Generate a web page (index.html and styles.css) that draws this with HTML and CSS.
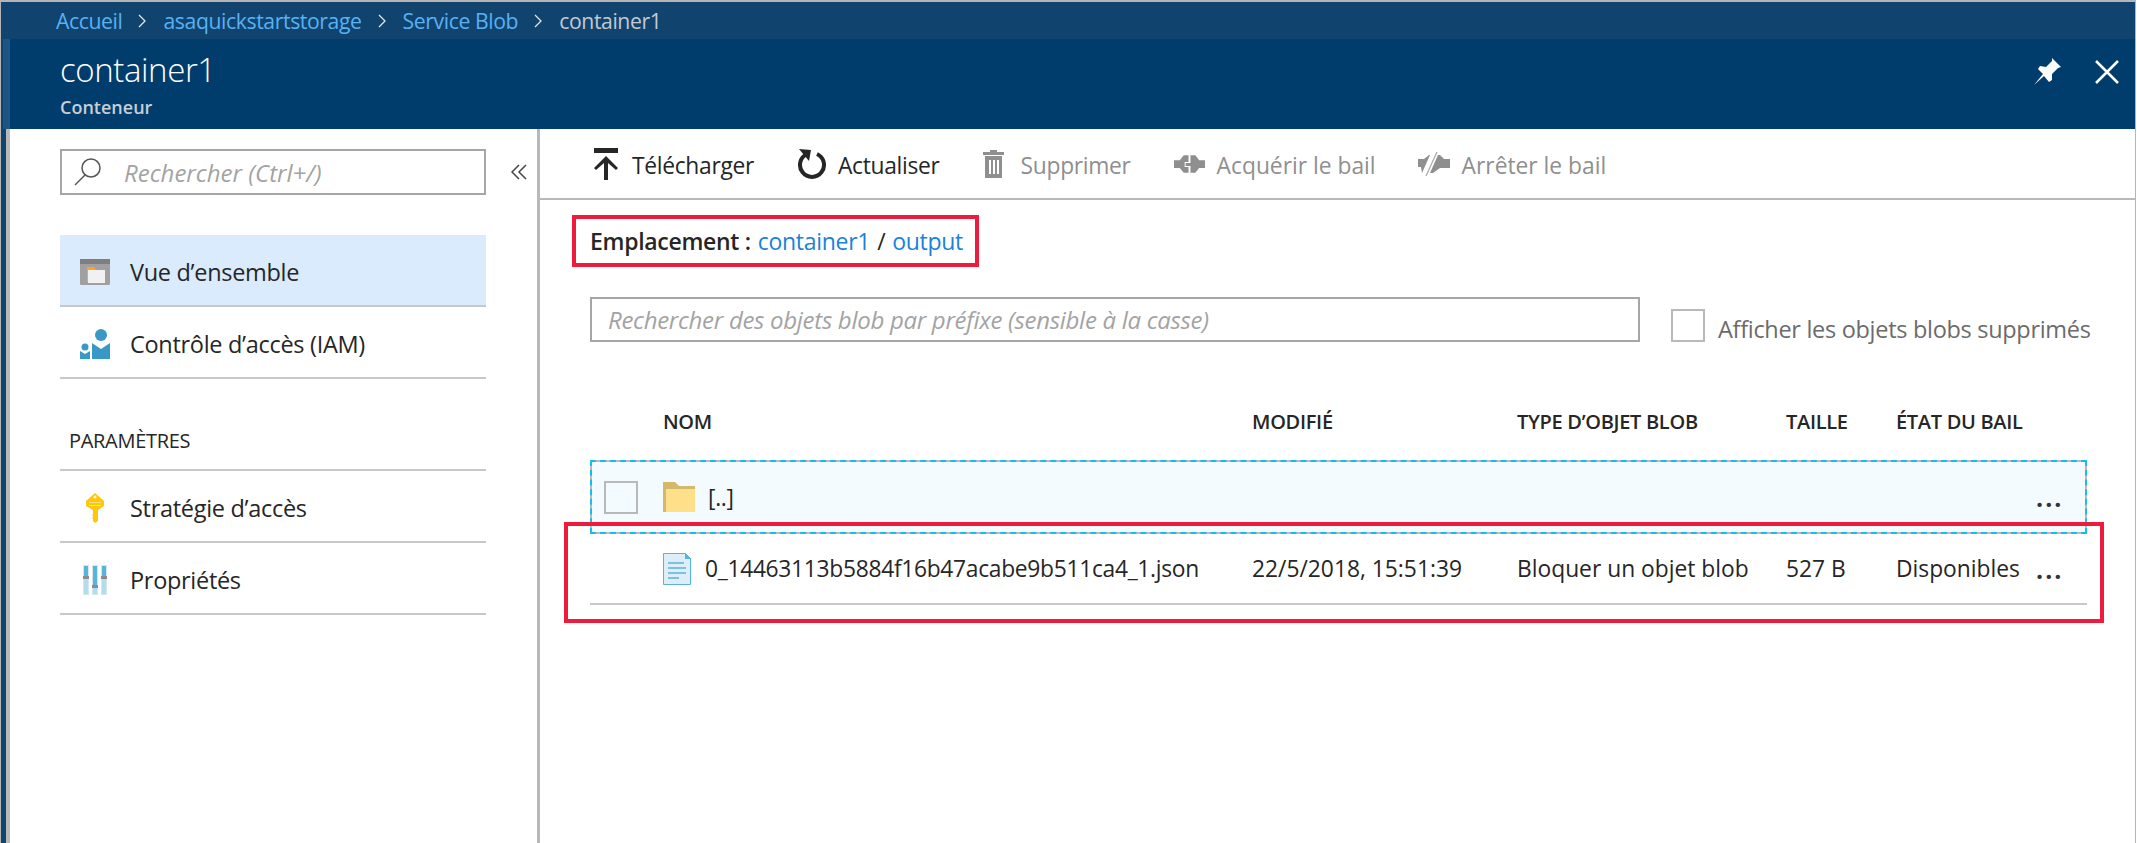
FILE: index.html
```html
<!DOCTYPE html>
<html lang="fr">
<head>
    <meta charset="UTF-8">
    <title>container1</title>
    <link rel="stylesheet" href="styles.css">
</head>
<body>
    <div class="frame">
        <nav class="crumbs">
            <a>Accueil</a>
            <svg class="chev" viewBox="0 0 8 14"><path d="M1 1l6 6-6 6" /></svg>
            <a>asaquickstartstorage</a>
            <svg class="chev" viewBox="0 0 8 14"><path d="M1 1l6 6-6 6" /></svg>
            <a>Service Blob</a>
            <svg class="chev" viewBox="0 0 8 14"><path d="M1 1l6 6-6 6" /></svg>
            <span>container1</span>
        </nav>

        <header class="blade-head">
            <div class="titles">
                <h1>container1</h1>
                <p>Conteneur</p>
            </div>
            <div class="head-icons">
                <svg class="pin" viewBox="0 0 28 28"><path d="M19 1l9 9-3 1-6 6 0 6-3 2-5-6-10 9 9-11-5-5 2-3 6 1 6-6z" /></svg>
                <svg class="close" viewBox="0 0 24 24"><path d="M1 1l22 22M23 1L1 23" /></svg>
            </div>
        </header>

        <div class="blade-body">
            <aside class="side">
                <div class="side-search">
                    <div class="search-box">
                        <svg class="loupe" viewBox="0 0 28 28"><circle cx="17" cy="10" r="9" /><path d="M11 17L1 27" /></svg>
                        <span>Rechercher (Ctrl+/)</span>
                    </div>
                    <svg class="collapse" viewBox="0 0 16 16"><path d="M8 1L1 8l7 7M15 1L8 8l7 7" /></svg>
                </div>

                <ul class="menu">
                    <li class="active">
                        <svg viewBox="0 0 30 26"><rect width="30" height="26" rx="1" fill="#a0a0a0" /><rect width="30" height="5" fill="#7f7f7f" /><path d="M7 8h7l2 3h7v12H7z" fill="#f9a825" /><rect x="8" y="11" width="17" height="13" fill="#f1f1f1" /></svg>
                        Vue d’ensemble
                    </li>
                    <li>
                        <svg viewBox="0 0 30 30"><circle cx="21" cy="6" r="6" fill="#3999c6" /><path d="M12 14l9 6 9-6v16H12z" fill="#3999c6" /><circle cx="5" cy="18" r="3.500" fill="#3999c6" /><path d="M0 22l5 3 5-3v8H0z" fill="#3999c6" /></svg>
                        Contrôle d’accès (IAM)
                    </li>
                </ul>

                <h2 class="menu-title">PARAMÈTRES</h2>

                <ul class="menu">
                    <li>
                        <svg viewBox="0 0 30 30"><path d="M15 0l9 8v5l-6 4v11l-3 2-2-2v-2l-1-1 1-1v-1l-1-1 1-1v-4L6 13V8z" fill="#ffc60a" /><circle cx="15" cy="4" r="1.500" fill="#fff3c4" /><path d="M9 9h12v1H9zM9 12h12v1H9z" fill="#ffe27a" /></svg>
                        Stratégie d’accès
                    </li>
                    <li>
                        <svg viewBox="0 0 30 30"><path d="M3 0h6v30H3zM12 0h6v30h-6zM21 0h6v30h-6z" fill="#d5e6ef" /><path d="M4 1h4v28H4zM13 1h4v28h-4zM22 1h4v28h-4z" fill="#b3dcef" /><path d="M4 1h4v11H4zM13 1h4v20h-4zM22 1h4v11h-4z" fill="#59b4d9" /><path d="M3 11h6v3H3zM12 20h6v3h-6zM21 11h6v3h-6z" fill="#8c8c8c" /></svg>
                        Propriétés
                    </li>
                </ul>
            </aside>

            <main class="main">
                <div class="toolbar">
                    <div class="tool">
                        <svg class="ico-upload" viewBox="0 0 24 32"><path d="M0 0h24v5H0zM12 8l12 12-2 2-8-7v17h-4V15l-8 7-2-2z" fill="#262626" /></svg>
                        <span>Télécharger</span>
                    </div>
                    <div class="tool">
                        <svg class="ico-refresh" viewBox="0 0 31 32"><path d="M11 6A12 12 0 1 0 21 6" fill="none" stroke="#262626" stroke-width="4" /><path d="M3 1l12 1-2 11z" fill="#262626" /></svg>
                        <span>Actualiser</span>
                    </div>
                    <div class="tool off">
                        <svg class="ico-trash" viewBox="0 0 21 28"><path d="M7 0h7v2h7v3H0V2h7zM2 6h17v22H2zM6 10v14h2V10zM10 10v14h2V10zM14 10v14h2V10z" fill="#8f8f8f" fill-rule="evenodd" /></svg>
                        <span>Supprimer</span>
                    </div>
                    <div class="tool off wide">
                        <svg class="ico-lease" viewBox="0 0 32 18"><path d="M0 5h6l4-5h5v7h-4v5h4v6h-5l-4-5H0zM17 0h5l4 5h6v8h-6l-4 5h-5v-7h-5V8h5z" fill="#8f8f8f" /></svg>
                        <span>Acquérir le bail</span>
                    </div>
                    <div class="tool off wide">
                        <svg class="ico-break" viewBox="0 0 32 24"><path d="M0 7h6l5-4h1L4 21l-1-6H0zM32 7h-6l-4-4h-2L12 21h3l7-5h10z" fill="#8f8f8f" /><path d="M19 0L8 24" stroke="#a8a8a8" stroke-width="1.200" /></svg>
                        <span>Arrêter le bail</span>
                    </div>
                </div>

                <div class="location">
                    <b>Emplacement :</b> <a>container1</a> / <a>output</a>
                </div>

                <div class="filters">
                    <div class="prefix-box">Rechercher des objets blob par préfixe (sensible à la casse)</div>
                    <label class="show-deleted"><i class="box"></i> <span>Afficher les objets blobs supprimés</span></label>
                </div>

                <div class="blobs">
                    <div class="row head">
                        <div></div>
                        <div>NOM</div>
                        <div>MODIFIÉ</div>
                        <div>TYPE D’OBJET BLOB</div>
                        <div>TAILLE</div>
                        <div>ÉTAT DU BAIL</div>
                    </div>
                    <div class="row focus">
                        <div><i class="box"></i></div>
                        <div class="name">
                            <svg class="ico-folder" viewBox="0 0 32 30"><path d="M0 0h12l4 4h16v26H0z" fill="#d4b96a" /><path d="M3 7h29v23H3z" fill="#ffe08a" /></svg>
                            [..]
                        </div>
                        <div></div><div></div><div></div><div></div>
                        <div class="more">...</div>
                    </div>
                    <div class="row file">
                        <div></div>
                        <div class="name">
                            <svg class="ico-file" viewBox="0 0 28 32"><path d="M.5.5h22l5 5v26H.5z" fill="#deeef8" stroke="#59b4d9" /><path d="M22 0v6h6z" fill="#59b4d9" /><path d="M5 9h16v2H5zM5 14h18v2H5zM5 19h18v2H5zM5 24h11v2H5z" fill="#7cc0e2" /></svg>
                            0_14463113b5884f16b47acabe9b511ca4_1.json
                        </div>
                        <div>22/5/2018, 15:51:39</div>
                        <div>Bloquer un objet blob</div>
                        <div>527 B</div>
                        <div>Disponibles</div>
                        <div class="more">...</div>
                    </div>
                    <div class="red-mark"></div>
                </div>
            </main>
        </div>
    </div>
</body>
</html>
```

FILE: styles.css
```css
* {
    box-sizing: border-box;
}

html, body {
    margin: 0;
    padding: 0;
    background-color: #fff;
}

body {
    font-family: "Open Sans", "Noto Sans", sans-serif;
    color: #262626;
    width: 2137px;
    height: 843px;
    overflow: hidden;
}

ul, h1, h2, p {
    margin: 0;
    padding: 0;
}

ul {
    list-style: none;
}

/* outer window */
.frame {
    width: 2136px;
    height: 843px;
    border-top: 2px solid #b5b5b5;
    border-left: 1px solid #b5b5b5;
    border-right: 1px solid #b5b5b5;
    background-color: #10446f;
    display: flex;
    flex-direction: column;
}

/* breadcrumb */
.crumbs {
    height: 37px;
    display: flex;
    align-items: center;
    padding-left: 55px;
    font-size: 21.200px;
    letter-spacing: -0.4px;
    color: #c3c9cf;
}

.crumbs a {
    color: #58b1f3;
}

.chev {
    width: 8px;
    height: 14px;
    margin: 0 17px 0 16px;
    fill: none;
    stroke: #e0e6ea;
    stroke-width: 1.300;
}

/* blade title */
.blade-head {
    height: 90px;
    margin-left: 2px;
    border-left: 7px solid #1b5583;
    background-color: #003d6d;
    display: flex;
    justify-content: space-between;
    padding: 9px 16px 0 50px;
}

.titles h1 {
    font-size: 33px;
    font-weight: 300;
    line-height: 44px;
    letter-spacing: -0.4px;
    color: #fff;
}

.titles p {
    font-size: 18px;
    font-weight: 600;
    line-height: 22px;
    margin-top: 4px;
    color: #c6ced6;
}

.head-icons {
    display: flex;
    align-items: flex-start;
    gap: 34px;
    padding-top: 9px;
}

.pin {
    width: 28px;
    height: 28px;
    fill: #fff;
}

.close {
    width: 24px;
    height: 24px;
    margin-top: 3px;
    fill: none;
    stroke: #fff;
    stroke-width: 2.500;
}

/* blade content */
.blade-body {
    flex: 1;
    margin-left: 5px;
    border-left: 4px solid #b9b9b9;
    background-color: #fff;
    display: flex;
}

.side {
    width: 530px;
    flex: none;
    padding: 20px 0 0 50px;
    border-right: 3px solid #b9b9b9;
}

.side-search {
    display: flex;
    align-items: center;
}

.search-box {
    width: 426px;
    height: 46px;
    border: 2px solid #a6a6a6;
    display: flex;
    align-items: center;
    gap: 22px;
    padding-left: 12px;
    font-size: 24px;
    font-style: italic;
    color: #a3a3a3;
}

.loupe {
    width: 28px;
    height: 28px;
    flex: none;
    fill: none;
    stroke: #555;
    stroke-width: 1.500;
}

.collapse {
    width: 16px;
    height: 16px;
    margin-left: 25px;
    fill: none;
    stroke: #444;
    stroke-width: 1.500;
}

.menu {
    width: 426px;
}

.side-search + .menu {
    margin-top: 40px;
}

.menu li {
    height: 72px;
    border-bottom: 2px solid #c8c8c8;
    display: flex;
    align-items: center;
    gap: 20px;
    padding: 4px 0 0 20px;
    font-size: 23.500px;
    letter-spacing: -0.3px;
}

.menu li.active {
    background-color: #d9ebfd;
}

.menu svg {
    width: 30px;
    height: 30px;
    flex: none;
}

.menu-title {
    height: 92px;
    border-bottom: 2px solid #c8c8c8;
    width: 426px;
    padding: 49px 0 0 9px;
    font-size: 20px;
    font-weight: 400;
    line-height: 26px;
    letter-spacing: -0.3px;
}

/* main column */
.main {
    flex: 1;
    min-width: 0;
}

.toolbar {
    height: 71px;
    border-bottom: 2px solid #b9b9b9;
    display: flex;
    align-items: center;
    gap: 42px;
    padding-left: 54px;
    font-size: 22.800px;
    letter-spacing: -0.3px;
}

.tool {
    display: flex;
    align-items: center;
    gap: 12px;
}

.tool span {
    margin-top: 3px;
}

.tool.off {
    color: #8f8f8f;
}

.tool.wide span {
    letter-spacing: 0;
}

.ico-upload { width: 24px; height: 32px; margin-right: 2px; }
.ico-refresh { width: 31px; height: 32px; margin-right: -1px; }
.ico-trash { width: 21px; height: 28px; margin: 0 5px 0 1px; }
.ico-lease { width: 31px; height: 18px; margin-left: 1px; }
.ico-break { width: 32px; height: 24px; }

.location {
    width: 407px;
    height: 52px;
    margin: 15px 0 0 32px;
    border: 4px solid #ee1b3d;
    display: flex;
    align-items: center;
    gap: 7px;
    padding-left: 14px;
    font-size: 23px;
    letter-spacing: -0.3px;
}

.location b {
    font-weight: 600;
}

.location a {
    color: #1b82d6;
}

.filters {
    display: flex;
    align-items: flex-end;
    margin: 30px 0 0 50px;
}

.prefix-box {
    width: 1050px;
    height: 45px;
    border: 2px solid #a6a6a6;
    display: flex;
    align-items: center;
    padding-left: 16px;
    font-size: 24px;
    font-style: italic;
    letter-spacing: -0.3px;
    color: #a3a3a3;
}

.box {
    display: block;
    width: 34px;
    height: 33px;
    border: 2px solid #b9b9b9;
    flex: none;
}

.show-deleted {
    display: flex;
    align-items: flex-end;
    gap: 13px;
    margin-left: 31px;
    font-size: 23.500px;
    line-height: 26px;
    letter-spacing: -0.3px;
    color: #6b6b6b;
}

/* blob list */
.blobs {
    position: relative;
    width: 1497px;
    margin: 60px 0 0 50px;
    font-size: 22.800px;
}

.row {
    display: grid;
    grid-template-columns: 73px 589px 265px 269px 110px 140px 1fr;
    align-items: center;
}

.row.head {
    height: 39px;
    font-size: 20px;
    font-weight: 600;
    letter-spacing: -0.3px;
}

.row.focus {
    height: 74px;
    margin-top: 19px;
    grid-template-columns: 71px 589px 265px 269px 110px 140px 1fr;
    border: 2px dashed #17bdee;
    background: linear-gradient(#f4fbfe, #f4fbfe) padding-box, #bbb border-box;
}

.row.focus > div:first-child {
    padding-left: 12px;
}

.row.file {
    height: 71px;
    border-bottom: 2px solid #c8c8c8;
}

.name {
    display: flex;
    align-items: center;
    gap: 13px;
    white-space: nowrap;
    letter-spacing: -0.3px;
}

.ico-folder { width: 32px; height: 30px; }
.ico-file { width: 28px; height: 32px; margin-right: 1px; }

.more {
    font-size: 25px;
    font-weight: 700;
    letter-spacing: 2px;
    line-height: 30px;
    color: #333;
}

/* annotation round the file row */
.red-mark {
    position: absolute;
    left: -26px;
    right: -17px;
    top: 120px;
    height: 101px;
    border: 4px solid #ee1b3d;
}
```
